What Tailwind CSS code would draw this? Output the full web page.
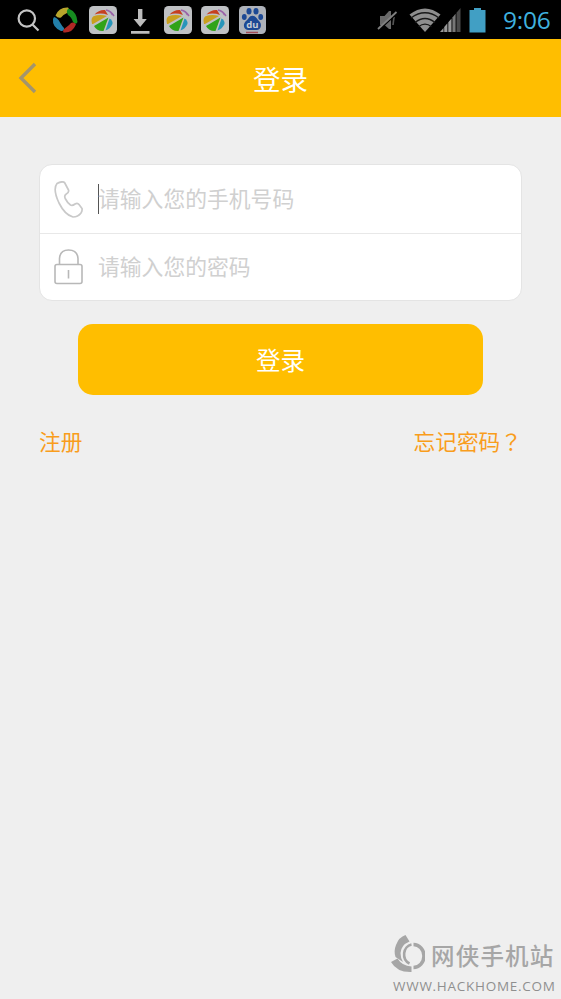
<!DOCTYPE html>
<html lang="zh-CN">
<head>
<meta charset="utf-8">
<title>登录</title>
<script src="https://cdn.jsdelivr.net/npm/@tailwindcss/browser@4"></script>
</head>
<body class="h-[999px] w-[561px] overflow-hidden bg-[#efefef] font-['Noto_Sans_CJK_SC',sans-serif]">
<svg class="hidden">
  <symbol id="ball" viewBox="0 0 28 28">
    <rect width="28" height="28" rx="4.5" fill="#bfc1c4"/>
    <path d="M5.500 8.500Q10 3.500 16 4L19 9Q12 6.500 5.500 8.500z" fill="#c63f20"/>
    <path d="M3 18Q1.500 12 4.500 10.200Q11 8 18 10L4 18z" fill="#c9a01e"/>
    <path d="M5 20L19.500 11.500L14.500 25Q8 25.500 5 20z" fill="#31a319"/>
    <path d="M20.500 12.500Q24 14.500 23.500 18Q21 23 16.500 24.500z" fill="#2795ba"/>
    <path d="M17 4Q22 5 25 10M20 5Q22 6 23.500 9" fill="none" stroke="#9a62a8" stroke-width="1.500"/>
  </symbol>
</svg>
<div class="flex h-full flex-col">
  <div class="flex h-[39px] shrink-0 items-center bg-black pl-[17px] pr-[10px]">
    <svg class="h-[24px] w-[24px]" viewBox="0 0 24 24" fill="none" stroke="#c4c4c4" stroke-width="2.200"><circle cx="9.800" cy="10.500" r="8.200"/><path d="M15.500 16.500L21.500 22.500"/></svg>
    <svg class="ml-[11px] h-[28px] w-[27px]" viewBox="0 0 27 28">
      <path d="M3.500 9.500Q7 1 16 1.500Q18.500 4 15 7Q11 8.500 9 11.500Q6 12.500 3.500 9.500z" fill="#b8a52c"/>
      <path d="M16.500 2.500Q25 6 25.500 16Q24 19.500 21 16Q19.500 11 16 9Q13.500 5 16.500 2.500z" fill="#168b20"/>
      <path d="M2 11Q6 12 8 16.500Q10 20 12 22Q12.500 25.500 9 25Q0 21 1 13z" fill="#237fa9"/>
      <path d="M24 18.500Q20 27.500 11.500 26.500Q10 24 14 21.500Q17.500 19 19 17Q22 15.500 24 18.500z" fill="#b02925"/>
    </svg>
    <svg class="ml-[10px] h-[28px] w-[28px]"><use href="#ball"/></svg>
    <svg class="ml-[13px] h-[28px] w-[20px]" viewBox="0 0 20 28" fill="#bcbcbc"><path d="M8 3h4.400v10h4.400L10.200 21L3.600 13H8zM1 25h18.500v2.700H1z"/></svg>
    <svg class="ml-[14px] h-[28px] w-[28px]"><use href="#ball"/></svg>
    <svg class="ml-[9px] h-[28px] w-[28px]"><use href="#ball"/></svg>
    <svg class="ml-[10px] h-[28px] w-[27px]" viewBox="0 0 27 28">
      <rect width="27" height="28" rx="4.500" fill="#aeb2b9"/>
      <g fill="#1d4994"><ellipse cx="10" cy="5.300" rx="2.500" ry="3.300"/><ellipse cx="17" cy="5.300" rx="2.500" ry="3.300"/><ellipse cx="5.300" cy="11" rx="2.400" ry="3"/><ellipse cx="21.700" cy="11" rx="2.400" ry="3"/><path d="M13.500 9.800C17 9.800 18 13.500 20 15C23.500 18 22 24 18 24H9C4.500 24 3.500 18 7 15C9.500 13.500 10 9.800 13.500 9.800z"/></g>
      <text x="13.500" y="22" text-anchor="middle" font-family="Open Sans" font-size="9.500" font-weight="700" fill="#c8cdd5">du</text>
      <path d="M7 26.500h12" stroke="#a34b55" stroke-width="1.500"/>
    </svg>
    <svg class="ml-auto h-[24px] w-[22px]" viewBox="0 0 22 24"><path d="M4 8h4.500L13 3h2v18h-2l-4.500-4H4z" fill="#686868"/><path d="M18 9l-1 8" stroke="#555" stroke-width="1.600"/><path d="M3 22L21.500 5" stroke="#000" stroke-width="1.500"/><path d="M2 21L20.500 4" stroke="#808080" stroke-width="1.800"/></svg>
    <svg class="ml-[11px] h-[26px] w-[32px]" viewBox="0 0 32 26"><path d="M.5 7.500Q16-4.500 31.500 7.500L16 25z" fill="#8e8e8e"/><path d="M2 11Q16 .5 30 11M6 15.500Q16 7.500 26 15.500M9.500 19.800Q16 14.500 22.500 19.800" fill="none" stroke="#181818" stroke-width="1.300"/></svg>
    <svg class="-ml-[1px] h-[26px] w-[21px]" viewBox="0 0 21 26" fill="#999"><path d="M0 25l3.500-4v4zM4.200 20l3.200-3.700V25H4.200zM8.300 15.300l3.200-3.700V25H8.300z"/><path d="M12.400 10.500l3.200-3.700V25h-3.200z" fill="#777"/><path d="M16.500 5.700L20.500 1v24h-4z" fill="#4a4a4a"/></svg>
    <svg class="ml-[8px] h-[26px] w-[17px]" viewBox="0 0 17 26" fill="#419fc4"><path d="M5 1h7v2h4.500v22.500H.5V3H5z"/></svg>
    <span class="ml-[17px] w-[48px] whitespace-nowrap font-['Open_Sans',sans-serif] text-[24.500px] leading-[39px] tracking-[-0.200px] text-[#3fb1de]">9:06</span>
  </div>

  <header class="grid h-[78px] shrink-0 grid-cols-[1fr_auto_1fr] items-center bg-[#ffbe00]">
    <svg class="ml-[18px] h-[32px] w-[20px]" viewBox="0 0 20 32" fill="none" stroke="#a4956c" stroke-width="3.400"><path d="M17 2L3 16L17 30"/></svg>
    <h1 class="text-[27.500px] leading-[40px] text-white">登录</h1>
  </header>

  <main class="px-[39px] pt-[47px]">
    <div class="h-[137px] w-[483px] rounded-[13px] border border-[#e4e4e4] bg-white text-[21.800px] text-[#d0d0d0]">
      <div class="flex h-[69px] items-center border-b border-[#e8e8e8] pl-[14px]">
        <svg class="h-[37px] w-[29px]" viewBox="0 0 29 37" fill="none" stroke="#c9c9c9" stroke-width="1.700" stroke-linejoin="round"><path d="M3 2.500Q8 -.3 10.500 1.500L14.500 9Q15.300 11.500 12 13.200Q10 14.500 11.200 17.500Q13.500 22 16.500 24Q18.500 25 21 23Q23.500 21.500 25 23.500L28 27.500Q28.500 29.500 27 32Q24 36 19 36Q11 34 5 22Q-1.500 8 3 2.500z"/></svg>
        <span class="ml-[15px] h-[30px] w-px bg-[#555]"></span>
        <span class="-ml-px pb-[2px]">请输入您的手机号码</span>
      </div>
      <div class="flex h-[66px] items-center pl-[14px]">
        <svg class="h-[36px] w-[29px]" viewBox="0 0 29 36" fill="none" stroke="#b8b8b8" stroke-width="1.600"><rect x="1" y="15.500" width="27" height="19" rx="2"/><path d="M5.500 15V9.500Q6 1 14.500 1Q23.500 1 24 9.500V15M14.500 21v8.500"/></svg>
        <span class="ml-[15px] pb-[2px]">请输入您的密码</span>
      </div>
    </div>
    <button class="mx-auto mt-[23px] block h-[71px] w-[405px] rounded-[15px] bg-[#ffbe00] pt-[2px] text-[24.500px] text-white">登录</button>
    <div class="mt-[29px] flex justify-between text-[21.700px] leading-[34px] text-[#f99d1c]">
      <a>注册</a>
      <a>忘记密码<span lang="zh-TW" class="font-['Noto_Sans_CJK_TC',sans-serif]">？</span></a>
    </div>
  </main>

  <footer class="mt-auto ml-[391px] h-[65px] text-[#a6a6a6]">
    <div class="flex h-[40px] items-center">
      <svg class="h-[40px] w-[34px] shrink-0" viewBox="0 0 34 40" fill="none"><path d="M14.500 1L18.500 7.500Q10 11 9.500 19Q9.500 24 12 28L4.500 23Q2.500 17 5 11Q8 3 14.500 1z" fill="#a6a6a6"/><path d="M0 28L6.500 24.500Q11 32 20.500 32.500V38Q6 38.500 0 28z" fill="#a6a6a6"/><path d="M22.500 10.500A10.500 11.500 0 0 1 22.500 33.500" stroke="#a6a6a6" stroke-width="3.600"/><path d="M20.500 10.500A9 10 0 0 0 18.500 29.500" stroke="#a6a6a6" stroke-width="2.600"/></svg>
      <span class="ml-[6px] whitespace-nowrap pt-[2px] text-[23.500px] font-medium leading-[40px] tracking-[1.200px]">网侠手机站</span>
    </div>
    <div class="ml-[2px] whitespace-nowrap font-['Open_Sans',sans-serif] text-[13.500px] font-medium leading-[24px] tracking-[0.730px] text-[#8f8f8f]">WWW.HACKHOME.COM</div>
  </footer>
</div>
</body>
</html>
